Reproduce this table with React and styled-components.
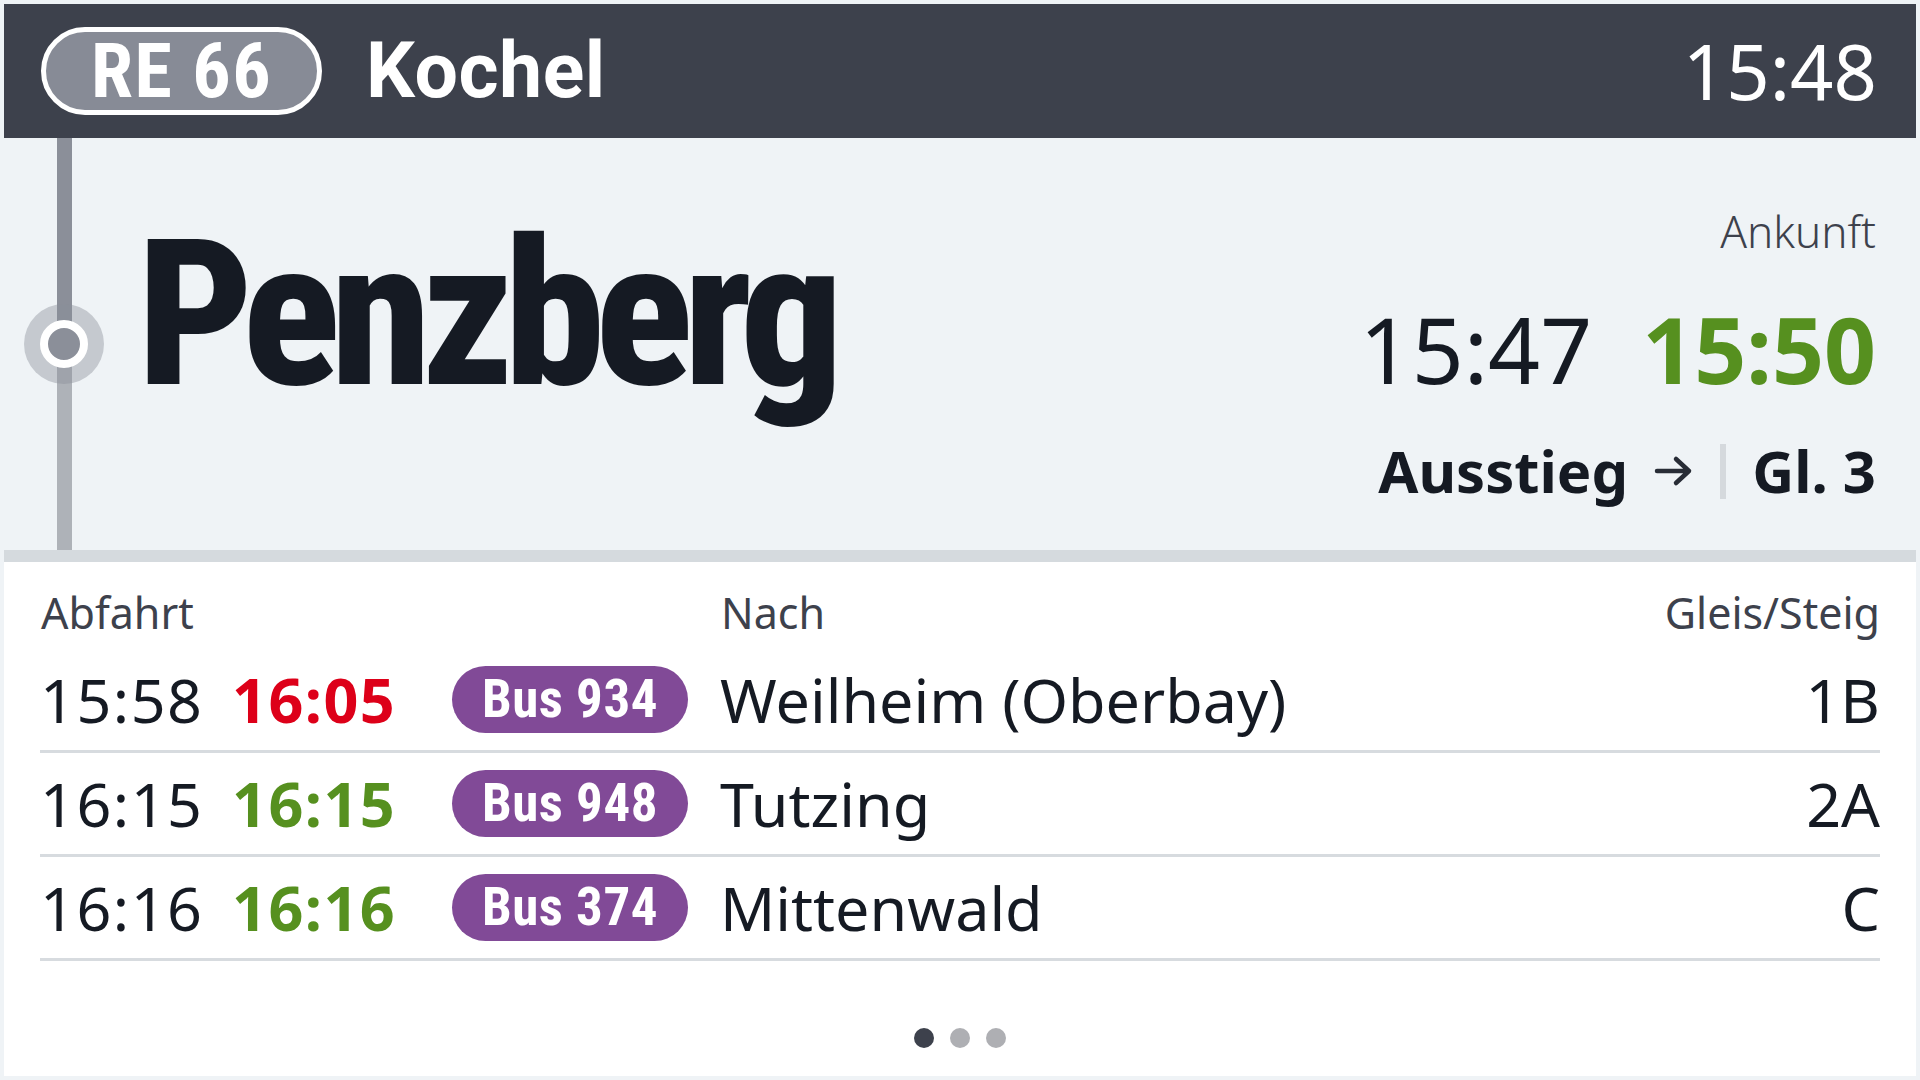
import React from "react";
import styled, { createGlobalStyle } from "styled-components";

const CONDENSED = `"Roboto", "DejaVu Sans Condensed", sans-serif`;

const GlobalStyle = createGlobalStyle`
  *, *::before, *::after { box-sizing: border-box; }
  html, body {
    margin: 0;
    padding: 0;
    background: #eff3f6;
  }
  body {
    font-family: "Noto Sans", "Open Sans", sans-serif;
    color: #151a23;
  }
`;

const departures = [
  { planned: "15:58", actual: "16:05", late: true, line: "Bus 934", to: "Weilheim (Oberbay)", stop: "1B" },
  { planned: "16:15", actual: "16:15", late: false, line: "Bus 948", to: "Tutzing", stop: "2A" },
  { planned: "16:16", actual: "16:16", late: false, line: "Bus 374", to: "Mittenwald", stop: "C" },
];

const App = () => {
  return (
    <>
      <GlobalStyle />
      <Screen>
        <Header>
          <LinePill>RE 66</LinePill>
          <Direction>Kochel</Direction>
          <Clock>15:48</Clock>
        </Header>

        <Arrival>
          <Track>
            <Segment $dark />
            <StopDot />
            <Segment />
          </Track>
          <StationName>Penzberg</StationName>
          <ArrivalInfo>
            <Label>Ankunft</Label>
            <ArrivalTimes>
              <span>15:47</span>
              <ActualTime>15:50</ActualTime>
            </ArrivalTimes>
            <ExitRow>
              <span>Ausstieg</span>
              <svg width="40" height="32" viewBox="0 0 40 32" fill="none">
                <path
                  d="M3 16H35M22 4L35 16L22 28"
                  stroke="#282c36"
                  strokeWidth="4.5"
                  strokeLinecap="round"
                  strokeLinejoin="round"
                />
              </svg>
              <Divider />
              <span>Gl. 3</span>
            </ExitRow>
          </ArrivalInfo>
        </Arrival>

        <Departures>
          <HeadRow>
            <HeadCell $span={3}>Abfahrt</HeadCell>
            <HeadCell>Nach</HeadCell>
            <HeadCell $right>Gleis/Steig</HeadCell>
          </HeadRow>
          {departures.map((d) => (
            <Row key={d.line}>
              <RowTime>{d.planned}</RowTime>
              <RowTime $actual $late={d.late}>{d.actual}</RowTime>
              <BusPill>{d.line}</BusPill>
              <span>{d.to}</span>
              <Platform>{d.stop}</Platform>
            </Row>
          ))}
          <Pager>
            <PageDot $active />
            <PageDot />
            <PageDot />
          </Pager>
        </Departures>
      </Screen>
    </>
  );
};

const Screen = styled.div`
  width: 1920px;
  height: 1080px;
  padding: 4px;
  display: flex;
  flex-direction: column;
`;

const Header = styled.header`
  flex: none;
  height: 134px;
  background: #3d414c;
  color: #fff;
  display: flex;
  align-items: center;
  padding: 0 39px 0 37px;
`;

const LinePill = styled.div`
  width: 281px;
  height: 88px;
  border: 5px solid #fff;
  border-radius: 44px;
  background: #878b96;
  display: flex;
  align-items: center;
  justify-content: center;
  font-family: ${CONDENSED};
  font-stretch: 87.5%;
  font-weight: 700;
  font-size: 76px;
  line-height: 1;
  letter-spacing: 1.5px;
`;

const Direction = styled.div`
  margin-left: 44px;
  font-family: ${CONDENSED};
  font-stretch: 97%;
  font-weight: 700;
  font-size: 77px;
  line-height: 1;
  letter-spacing: 0.5px;
`;

const Clock = styled.div`
  margin-left: auto;
  font-size: 76px;
  line-height: 1;
`;

const Arrival = styled.section`
  flex: none;
  height: 424px;
  display: flex;
  background: #eff3f6;
  border-bottom: 12px solid #d5dade;
  padding-right: 40px;
`;

const Track = styled.div`
  width: 80px;
  margin-left: 20px;
  display: flex;
  flex-direction: column;
  align-items: center;
`;

const Segment = styled.div`
  flex: 1;
  width: 15px;
  background: ${(p) => (p.$dark ? "#8b8f99" : "#aeb2b8")};
`;

const StopDot = styled.div`
  flex: none;
  width: 80px;
  height: 80px;
  position: relative;
  background:
    linear-gradient(#8b8f99, #8b8f99) center top / 15px 50% no-repeat,
    linear-gradient(#aeb2b8, #aeb2b8) center bottom / 15px 50% no-repeat;

  &::before {
    content: "";
    position: absolute;
    inset: 0;
    border-radius: 50%;
    background: rgba(139, 143, 153, 0.42);
  }

  &::after {
    content: "";
    position: absolute;
    left: 16px;
    top: 16px;
    width: 48px;
    height: 48px;
    border-radius: 50%;
    border: 8px solid #fff;
    background: #8b8f99;
  }
`;

const StationName = styled.h1`
  margin: 0 0 0 33px;
  padding-top: 75px;
  font-family: ${CONDENSED};
  font-stretch: 75%;
  font-weight: 800;
  font-size: 204px;
  line-height: 1;
  letter-spacing: -10px;
  color: #151a23;
`;

const ArrivalInfo = styled.div`
  margin-left: auto;
  padding-top: 71px;
  display: flex;
  flex-direction: column;
  align-items: flex-end;
`;

const Label = styled.div`
  font-size: 44px;
  font-weight: 300;
  line-height: 1;
  color: #3d414c;
`;

const ArrivalTimes = styled.div`
  margin-top: 51px;
  display: flex;
  gap: 50px;
  font-size: 91px;
  line-height: 1;
`;

const ActualTime = styled.span`
  font-weight: 700;
  color: #56901f;
`;

const ExitRow = styled.div`
  margin-top: 47px;
  display: flex;
  align-items: center;
  gap: 26px;
  font-size: 58px;
  font-weight: 700;
  line-height: 1;
`;

const Divider = styled.div`
  width: 6px;
  height: 55px;
  background: #d5d9dd;
`;

const Departures = styled.section`
  flex: 1;
  background: #fff;
  display: flex;
  flex-direction: column;
  padding: 0 36px;
`;

const COLUMNS = "192px 220px 268px 1fr auto";

const HeadRow = styled.div`
  display: grid;
  grid-template-columns: ${COLUMNS};
  height: 87px;
  padding-top: 29px;
  font-size: 43px;
  line-height: 1;
  color: #3d414c;
`;

const HeadCell = styled.div`
  padding-left: 1px;
  grid-column: ${(p) => (p.$span ? `span ${p.$span}` : "auto")};
  text-align: ${(p) => (p.$right ? "right" : "left")};
`;

const Row = styled.div`
  display: grid;
  grid-template-columns: ${COLUMNS};
  align-items: center;
  height: 104px;
  border-bottom: 3px solid #d7dbdf;
  font-size: 61px;
  line-height: 1;
  color: #151a23;
`;

const RowTime = styled.span`
  letter-spacing: 1.5px;
  font-weight: ${(p) => (p.$actual ? 700 : 400)};
  color: ${(p) => (!p.$actual ? "#151a23" : p.$late ? "#dd0019" : "#56901f")};
`;

const BusPill = styled.span`
  width: 236px;
  height: 67px;
  border-radius: 34px;
  background: #814a97;
  color: #fff;
  display: inline-flex;
  align-items: center;
  justify-content: center;
  font-family: ${CONDENSED};
  font-stretch: 87.5%;
  font-weight: 700;
  font-size: 53px;
  letter-spacing: 0.5px;
`;

const Platform = styled.span`
  text-align: right;
`;

const Pager = styled.div`
  margin-top: auto;
  padding-bottom: 28px;
  display: flex;
  justify-content: center;
  gap: 16px;
`;

const PageDot = styled.span`
  width: 20px;
  height: 20px;
  border-radius: 50%;
  background: ${(p) => (p.$active ? "#3d414c" : "#aeafb3")};
`;

export default App;
